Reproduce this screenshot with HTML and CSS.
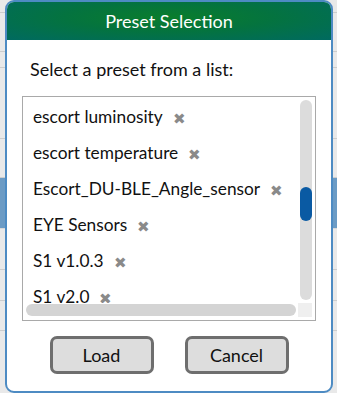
FILE: index.html
```html
<!DOCTYPE html>
<html lang="en">
<head>
    <meta charset="UTF-8">
    <meta name="viewport" content="width=device-width, initial-scale=1.0">
    <title>Preset Selection</title>
    <link rel="stylesheet" href="styles.css">
</head>
<body>
    <!-- page behind the modal -->
    <div class="backdrop">
        <div class="bg-row" style="height: 12px"></div>
        <div class="bg-row" style="height: 38px"></div>
        <div class="bg-row" style="height: 15px"></div>
        <div class="bg-row" style="height: 70px"></div>
        <div class="bg-row" style="height: 38px"></div>
        <div class="bg-row bg-band" style="height: 50px"></div>
        <div class="bg-row" style="height: 40px"></div>
        <div class="bg-row" style="height: 30px"></div>
        <div class="bg-row" style="height: 29px"></div>
    </div>

    <div class="dialog">
        <div class="dialog-header">Preset Selection</div>

        <div class="dialog-body">
            <p class="dialog-label">Select a preset from a list:</p>

            <div class="preset-list">
                <ul class="preset-items">
                    <li><span>escort luminosity</span><span class="remove">&#x2716;</span></li>
                    <li><span>escort temperature</span><span class="remove">&#x2716;</span></li>
                    <li><span>Escort_DU-BLE_Angle_sensor</span><span class="remove">&#x2716;</span></li>
                    <li><span>EYE Sensors</span><span class="remove">&#x2716;</span></li>
                    <li><span>S1 v1.0.3</span><span class="remove">&#x2716;</span></li>
                    <li><span>S1 v2.0</span><span class="remove">&#x2716;</span></li>
                </ul>
                <div class="vscroll"><div class="vthumb"></div></div>
                <div class="hscroll"></div>
                <div class="scroll-corner"></div>
            </div>

            <div class="dialog-buttons">
                <button class="btn">Load</button>
                <button class="btn">Cancel</button>
            </div>
        </div>
    </div>
</body>
</html>
```

FILE: styles.css
```css
body {
    margin: 0;
    background-color: #e9e9e9;
    font-family: Lato, "Noto Sans", sans-serif;
    width: 337px;
    height: 393px;
    overflow: hidden;
}

.backdrop {
    display: flex;
    flex-direction: column;
}

.bg-row {
    border-bottom: 1px solid #cdcdcd;
}

.bg-band {
    background-color: #6b9bc5;
    border-bottom-color: #d8d8d8;
}

/* modal sits over the page */
.dialog {
    position: absolute;
    left: 5px;
    top: 0;
    width: 324px;
    height: 389px;
    background-color: white;
    border: 2px solid #4d8bc3;
    border-radius: 9px;
    overflow: hidden;
    display: flex;
    flex-direction: column;
}

.dialog-header {
    height: 38px;
    display: flex;
    align-items: center;
    justify-content: center;
    color: white;
    font-size: 18px;
    background: radial-gradient(ellipse at 50% 40%, #0a7d2c 0%, #04733f 45%, #006a60 100%);
}

.dialog-body {
    flex: 1;
    display: flex;
    flex-direction: column;
}

.dialog-label {
    margin: 18px 0 0 23px;
    font-size: 18px;
    line-height: 22px;
    color: #111;
}

.preset-list {
    margin: 16px 0 0 15px;
    width: 292px;
    height: 223px;
    border: 1px solid #a9a9a9;
    display: grid;
    grid-template-columns: 275px 17px;
    grid-template-rows: 206px 17px;
}

.preset-items {
    list-style: none;
    margin: 0;
    padding: 1px 0 0 10px;
    overflow: hidden;
    font-size: 17.3px;
    color: #111;
}

.preset-items li {
    height: 36px;
    display: flex;
    align-items: center;
    white-space: nowrap;
}

.remove {
    margin-left: 10px;
    margin-top: 4px;
    font-size: 15px;
    color: #8a8a8a;
}

.vscroll {
    margin: 3px 0 0 2px;
    width: 12px;
    height: 200px;
    border-radius: 6px;
    background-color: #dcdcdc;
    overflow: hidden;
}

.vthumb {
    margin-top: 87px;
    height: 34px;
    border-radius: 6px;
    background-color: #0a5aa3;
}

.hscroll {
    margin: 1px 0 0 3px;
    width: 270px;
    height: 12px;
    border-radius: 6px;
    background-color: #d4d4d4;
}

.scroll-corner {
    width: 14px;
    height: 14px;
    background-color: #efefef;
}

.dialog-buttons {
    display: flex;
    justify-content: center;
    gap: 31px;
    margin-top: 15px;
}

.btn {
    width: 104px;
    height: 38px;
    font-family: inherit;
    font-size: 18px;
    color: #111;
    background-color: #dddddd;
    border: 3px solid #6e6e6e;
    border-radius: 7px;
    cursor: pointer;
}
```
